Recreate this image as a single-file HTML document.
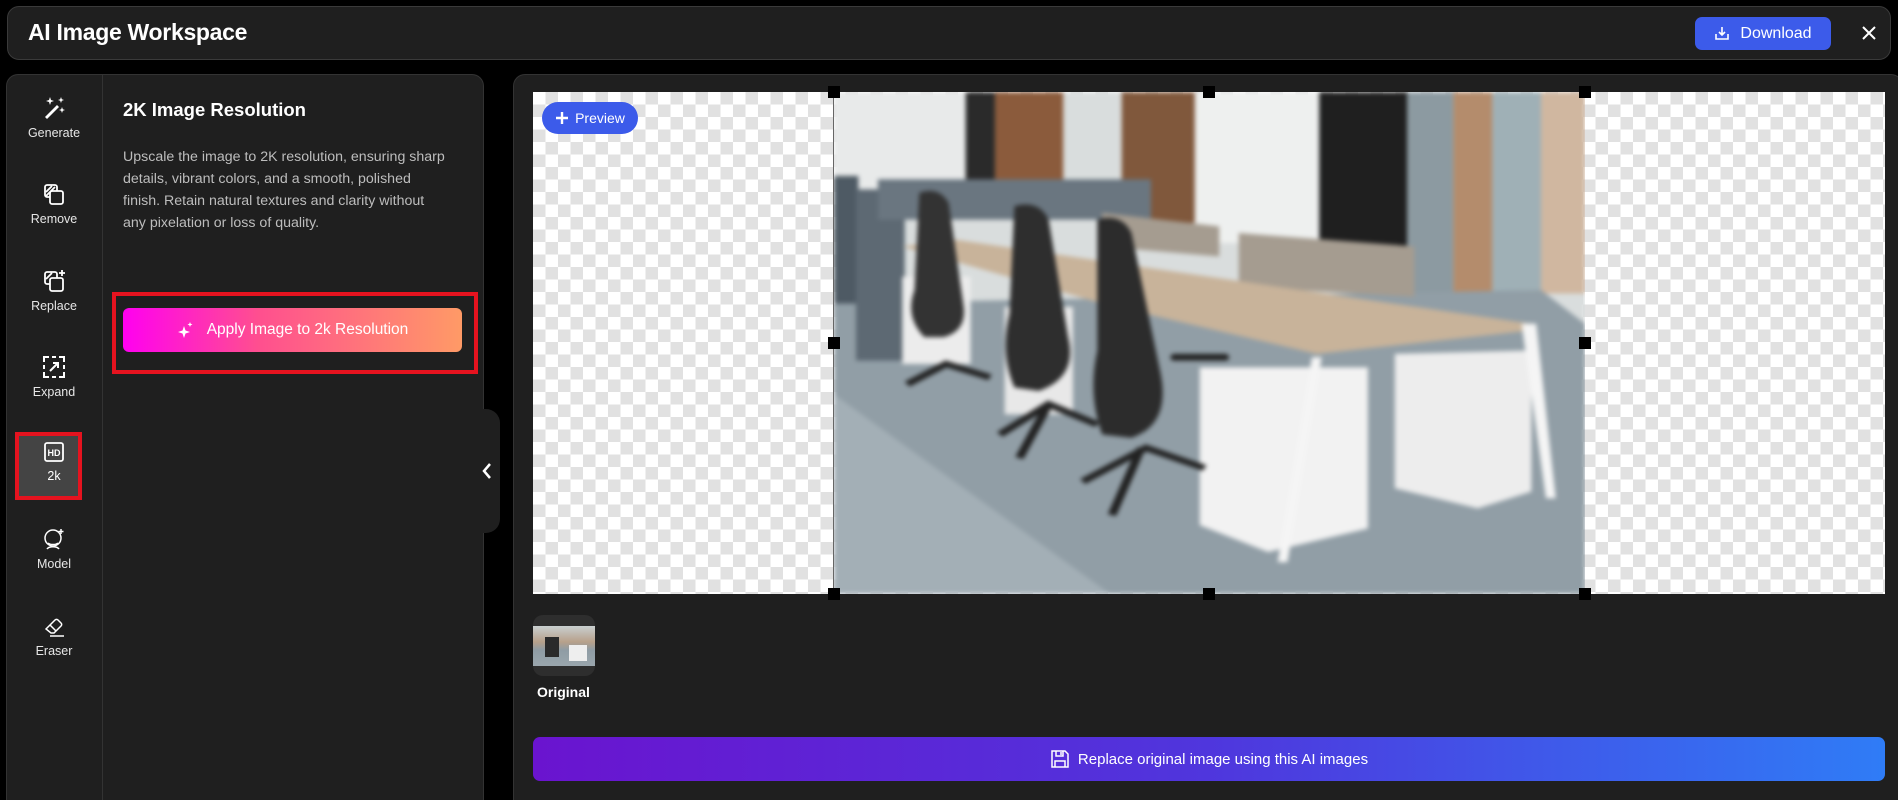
<!DOCTYPE html>
<html><head><meta charset="utf-8"><style>
*{box-sizing:border-box;margin:0;padding:0}
html{width:1898px;height:800px;overflow:hidden}
body{width:1898px;height:800px;background:#000;font-family:"Liberation Sans",Arial,sans-serif;position:relative;overflow:hidden;color:#fff}
.abs{position:absolute}
.header{left:7px;top:6px;width:1884px;height:54px;background:#1f1f1f;border:1px solid #3a3a3a;border-radius:12px}
.title{left:28px;top:19px;font-size:23px;font-weight:bold;letter-spacing:-0.3px}
.dl{left:1695px;top:17px;width:136px;height:33px;background:#3c5bea;border-radius:7px;font-size:16px;display:flex;align-items:center;justify-content:center;gap:10px}
.lp{left:6px;top:74px;width:478px;height:726px;background:#1f1f1f;border:1px solid #333;border-bottom:none;border-radius:12px 12px 0 0}
.side{left:102px;top:75px;width:1px;height:725px;background:#333}
.it{position:absolute;left:6px;width:96px;text-align:center;font-size:12.5px;color:#e6e6e6}
.it svg{display:block;margin:0 auto 6px}
.rp{left:513px;top:74px;width:1390px;height:726px;background:#1f1f1f;border:1px solid #333;border-bottom:none;border-radius:12px 12px 0 0}
.canvas{left:533px;top:92px;width:1352px;height:502px;background-color:#fff;background-image:conic-gradient(#e1e1e1 25%,#fff 0 50%,#e1e1e1 0 75%,#fff 0);background-size:25px 25px}
.h{position:absolute;width:12px;height:12px;background:#000}
</style></head><body>
<div class="abs header"></div>
<div class="abs title">AI Image Workspace</div>
<div class="abs dl"><svg width="16" height="16" viewBox="0 0 16 16" fill="none" stroke="#fff" stroke-width="1.6"><path d="M8 1v8M5 6l3 3 3-3M2 8v5h12V8"/></svg>Download</div>
<svg class="abs" style="left:1861px;top:25px" width="16" height="16" viewBox="0 0 16 16" stroke="#fff" stroke-width="2"><path d="M2 2l12 12M14 2L2 14"/></svg>

<div class="abs lp"></div>
<div class="abs side"></div>
<div class="it" style="top:96px"><svg width="24" height="24" viewBox="0 0 24 24" fill="#fff"><path d="M3 21l12-12 2 2-12 12z" /><path d="M8 1l1 3 3 1-3 1-1 3-1-3-3-1 3-1zM19 1l.8 2.2 2.2.8-2.2.8L19 7l-.8-2.2L16 4l2.2-.8zM20 11l.8 2.2 2.2.8-2.2.8L20 17l-.8-2.2L17 14l2.2-.8z"/></svg>Generate</div>
<div class="it" style="top:182px"><svg width="24" height="24" viewBox="0 0 24 24" fill="none" stroke="#fff" stroke-width="1.8"><rect x="3" y="3" width="12" height="12" rx="2"/><rect x="8" y="9" width="13" height="13" rx="2" fill="#1f1f1f"/><path d="M4 10l6-6M4 14l9-9"/></svg>Remove</div>
<div class="it" style="top:269px"><svg width="24" height="24" viewBox="0 0 24 24" fill="none" stroke="#fff" stroke-width="1.8"><rect x="3" y="3" width="12" height="12" rx="2"/><rect x="8" y="9" width="13" height="13" rx="2" fill="#1f1f1f"/><path d="M4 10l6-6M20 1v6M17 4h6"/></svg>Replace</div>
<div class="it" style="top:355px"><svg width="24" height="24" viewBox="0 0 24 24" fill="none" stroke="#fff" stroke-width="2"><path d="M2 7V2h5M17 2h5v5M22 17v5h-5M7 22H2v-5M10 2h4M10 22h4M2 10v4M22 10v4"/><path d="M8 16l8-8M11 8h5v5"/></svg>Expand</div>
<div class="abs" style="left:15px;top:432px;width:67px;height:68px;background:#444;border:4px solid #e5131f"></div>
<div class="it" style="top:441px;color:#fff"><svg width="22" height="22" viewBox="0 0 22 22" fill="none" stroke="#fff" stroke-width="1.8"><rect x="2" y="2" width="18" height="18" rx="2"/><text x="11" y="15" font-size="9" font-weight="bold" fill="#fff" stroke="none" text-anchor="middle" font-family="Liberation Sans">HD</text></svg>2k</div>
<div class="it" style="top:527px"><svg width="24" height="24" viewBox="0 0 24 24" fill="none" stroke="#fff" stroke-width="1.5"><circle cx="11" cy="11" r="8"/><path d="M6 16c2 2 8 2 10 0M5 22c2-3 10-3 12 0M19 2v5M16.5 4.5h5"/></svg>Model</div>
<div class="it" style="top:614px"><svg width="24" height="24" viewBox="0 0 24 24" fill="none" stroke="#fff" stroke-width="1.5"><path d="M4 15l9-9a2 2 0 013 0l3 3a2 2 0 010 3l-7 7H9z M8 11l6 6M8 22h14"/></svg>Eraser</div>

<div class="abs" style="left:123px;top:99px;font-size:18.5px;font-weight:bold">2K Image Resolution</div>
<div class="abs" style="left:123px;top:146px;width:322px;font-size:14.2px;line-height:22px;color:#bdbdbd">Upscale the image to 2K resolution, ensuring sharp details, vibrant colors, and a smooth, polished finish. Retain natural textures and clarity without any pixelation or loss of quality.</div>
<div class="abs" style="left:112px;top:292px;width:366px;height:82px;border:4px solid #e5131f"></div>
<div class="abs" style="left:123px;top:308px;width:339px;height:44px;border-radius:6px;background:linear-gradient(90deg,#ff00f0,#ff4f8f 40%,#ff9a66);display:flex;align-items:center;justify-content:center;gap:12px;font-size:15.5px"><svg width="18" height="18" viewBox="0 0 18 18" fill="#fff"><path d="M7 5l1.5 4.5L13 11l-4.5 1.5L7 17l-1.5-4.5L1 11l4.5-1.5zM13 1l.7 1.8 1.8.7-1.8.7L13 6l-.7-1.8L10.5 3.5l1.8-.7z"/></svg>Apply Image to 2k Resolution</div>
<div class="abs" style="left:483px;top:409px;width:17px;height:124px;background:#1f1f1f;border-radius:0 14px 14px 0"></div>
<svg class="abs" style="left:481px;top:462px" width="12" height="18" viewBox="0 0 12 18" fill="none" stroke="#fff" stroke-width="2.5"><path d="M9 2L3 9l6 7"/></svg>

<div class="abs rp"></div>
<div class="abs canvas"></div>
<div class="abs" style="left:834px;top:92px;width:751px;height:502px;overflow:hidden">
<svg width="751" height="502" viewBox="10 10 1540 1495" preserveAspectRatio="none" style="filter:blur(2.5px)">
<rect x="0" y="0" width="1568" height="1530" fill="#d9dddd"/>
<rect x="0" y="0" width="280" height="300" fill="#e8eaea"/>
<rect x="280" y="0" width="60" height="290" fill="#2a2a2a"/>
<rect x="340" y="0" width="140" height="290" fill="#8b5b3c"/>
<rect x="600" y="0" width="150" height="400" fill="#80583c"/>
<rect x="750" y="0" width="255" height="460" fill="#eef0ef"/>
<rect x="1005" y="0" width="180" height="470" fill="#1f1f1f"/>
<rect x="1185" y="0" width="95" height="610" fill="#8c9aa1"/>
<rect x="1280" y="0" width="80" height="610" fill="#b48c6c"/>
<rect x="1360" y="0" width="100" height="610" fill="#9fb0b6"/>
<rect x="1460" y="0" width="108" height="610" fill="#d0b7a0"/>
<polygon points="0,640 1460,600 1568,720 1568,1530 0,1530" fill="#919ea6"/>
<polygon points="0,900 600,1530 0,1530" fill="#a3afb6"/>
<rect x="0" y="260" width="60" height="380" fill="#4e5a64"/>
<rect x="55" y="300" width="100" height="510" fill="#5d6973"/>
<rect x="100" y="270" width="560" height="120" fill="#6a7680"/>
<polygon points="840,430 1200,470 1200,620 840,590" fill="#a59c90"/>
<polygon points="560,370 800,410 800,500 560,470" fill="#a59c90"/>
<polygon points="150,470 260,450 1440,700 1440,720 1000,790 560,640" fill="#c8b39a"/>
<rect x="150" y="560" width="140" height="260" fill="#ececec"/>
<rect x="360" y="650" width="140" height="320" fill="#e8e8e8"/>
<polygon points="760,830 1105,830 1105,1310 900,1380 760,1300" fill="#f2f2f2"/>
<polygon points="1160,790 1440,780 1440,1200 1330,1250 1160,1190" fill="#ededed"/>
<polygon points="1420,700 1450,700 1490,1220 1470,1220" fill="#f5f5f5"/>
<polygon points="990,800 1010,800 940,1410 920,1410" fill="#f5f5f5"/>
<path d="M185,310 q40,-20 60,30 l30,300 q10,80 -40,100 l-40,0 q-40,-60 -20,-140z" fill="#333"/>
<path d="M380,350 q50,-20 70,40 l40,350 q20,120 -60,160 l-50,-10 q-30,-100 -10,-220z" fill="#2e2e2e"/>
<path d="M550,390 q50,-20 70,40 l60,420 q20,150 -60,190 l-60,-10 q-30,-120 -10,-250z" fill="#2c2c2c"/>
<path d="M160,880 l80,-60 90,40 M350,1030 l100,-90 100,60 M390,1100 l60,-160 M520,1170 l130,-100 120,60 M580,1270 l60,-200" stroke="#222" stroke-width="18" fill="none"/>
<rect x="700" y="790" width="120" height="20" rx="8" fill="#222"/>
</svg></div>
<div class="abs" style="left:833px;top:92px;width:1px;height:502px;background:#666"></div>
<div class="h" style="left:828px;top:86px"></div><div class="h" style="left:1203px;top:86px"></div><div class="h" style="left:1579px;top:86px"></div>
<div class="h" style="left:828px;top:337px"></div><div class="h" style="left:1579px;top:337px"></div>
<div class="h" style="left:828px;top:588px"></div><div class="h" style="left:1203px;top:588px"></div><div class="h" style="left:1579px;top:588px"></div>
<div class="abs" style="left:542px;top:102px;width:96px;height:32px;background:#3c5bea;border-radius:16px;font-size:14px;display:flex;align-items:center;justify-content:center;gap:6px"><svg width="14" height="14" viewBox="0 0 14 14" stroke="#fff" stroke-width="2.4"><path d="M7 1v12M1 7h12"/></svg>Preview</div>

<div class="abs" style="left:533px;top:615px;width:62px;height:61px;background:#2e2e2e;border-radius:10px;overflow:hidden">
<div style="position:absolute;left:0;top:11px;width:62px;height:40px;background:linear-gradient(180deg,#c9cfd0 0,#b7a08a 40%,#8f9ca4 60%,#9aa6ad 100%)"></div>
<div style="position:absolute;left:12px;top:22px;width:14px;height:20px;background:#2a2a2a"></div>
<div style="position:absolute;left:36px;top:30px;width:18px;height:16px;background:#eee"></div>
</div>
<div class="abs" style="left:537px;top:684px;font-size:14px;font-weight:bold">Original</div>
<div class="abs" style="left:533px;top:737px;width:1352px;height:44px;border-radius:7px;background:linear-gradient(90deg,#6a14cf,#4f36dd 50%,#2f7cf6);display:flex;align-items:center;justify-content:center;gap:8px;font-size:15px"><svg width="20" height="20" viewBox="0 0 20 20" fill="none" stroke="#fff" stroke-width="1.5"><path d="M2 2h13l3 3v13H2z M6 2v5h7V2 M5 18v-6h10v6 M11 3v3"/></svg>Replace original image using this AI images</div>
</body></html>
